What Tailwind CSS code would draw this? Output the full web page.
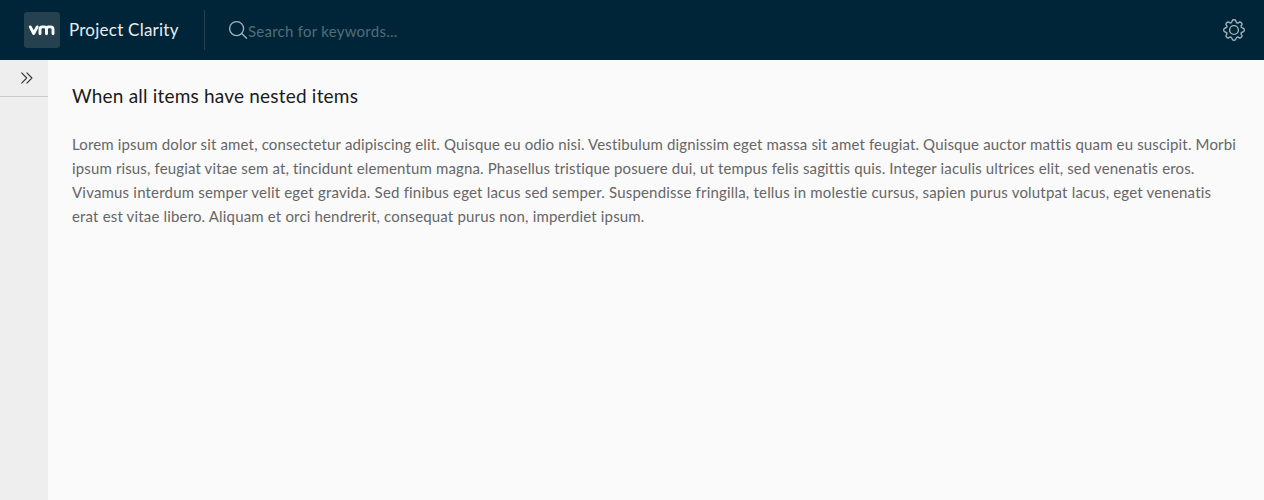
<!DOCTYPE html>
<html lang="en">
<head>
<meta charset="utf-8">
<title>Project Clarity</title>
<script src="https://cdn.jsdelivr.net/npm/@tailwindcss/browser@4"></script>
</head>
<body class="h-[500px] flex flex-col overflow-hidden bg-[#fafafa] font-['Lato',sans-serif]">
<header class="h-[60px] shrink-0 flex items-center bg-[#002538] pl-6 pr-[18px]">
  <svg class="size-9 shrink-0" viewBox="0 0 36 36" fill="none">
    <rect width="36" height="36" rx="3" fill="#25404f"/>
    <path d="M6.3 14.9 L9.7 21.5 L13.2 14.9 M16 21.7 V17.3 Q16 14.9 18.2 14.9 H20.2 Q22.5 14.9 22.5 17.3 V21.7 M22.5 17.3 Q22.5 14.9 24.7 14.9 H26.7 Q29 14.9 29 17.3 V21.7" stroke="#fff" stroke-width="2.9" stroke-linecap="round" stroke-linejoin="round"/>
  </svg>
  <span class="ml-[9px] w-[135px] shrink-0 whitespace-nowrap text-[17px] leading-6 tracking-[0.24px] text-[#e9edef]">Project Clarity</span>
  <div class="h-10 w-px bg-[#264252]"></div>
  <svg class="ml-6 size-5 shrink-0" viewBox="0 0 20 20" fill="none" stroke="#a6b4bc" stroke-width="1.3" stroke-linecap="round"><circle cx="7.6" cy="8.6" r="7"/><path d="M12.7 13.5 L17.6 18.3"/></svg>
  <span class="-ml-px mt-px whitespace-nowrap text-[15px] leading-6 tracking-[0.25px] text-[#536d7a]">Search for keywords...</span>
  <svg class="ml-auto size-6 shrink-0" viewBox="0 0 24 24" fill="none" stroke="#a6b4bc" stroke-width="1.4" stroke-linejoin="round"><circle cx="12" cy="12" r="4.4"/><path d="M10.3 2.6 Q10.5 1.7 12 1.7 T13.7 2.6 Q14.1 4.6 15.2 5 T17.5 4 Q18.2 3.7 19.3 4.7 T20 6.5 Q18.7 8.2 19.1 9 T21.4 10.3 Q22.3 10.6 22.3 12 T21.4 13.7 Q19.5 14.2 19.1 15.1 T20 17.5 Q20.3 18.2 19.3 19.3 T17.5 20 Q16.1 18.7 15.2 19.1 T13.7 21.4 Q13.5 22.3 12 22.3 T10.3 21.4 Q9.8 19.4 8.9 19.1 T6.5 20 Q5.8 20.3 4.7 19.3 T4 17.5 Q5.3 16 4.9 15.1 T2.6 13.7 Q1.7 13.4 1.7 12 T2.6 10.3 Q4.5 9.8 4.9 8.9 T4 6.5 Q3.7 5.7 4.7 4.7 T6.5 4 Q8 5.3 8.9 4.9 T10.3 2.6 Z"/></svg>
</header>
<div class="flex flex-1">
  <nav class="w-12 bg-[#eee]">
    <div class="h-[37px] border-b border-[#ccc] pl-[20px] pt-[11px]">
      <svg class="size-[14px]" viewBox="0 0 14 14" fill="none" stroke="#333" stroke-width="1.1" stroke-linecap="round" stroke-linejoin="round"><path d="M1.7 1.9 L6.7 7 L1.7 12.1 M6.9 1.9 L11.9 7 L6.9 12.1"/></svg>
    </div>
  </nav>
  <main class="flex-1 pl-6 pt-6 whitespace-nowrap">
    <h1 class="text-[19px] leading-6 tracking-[0.2px] text-[#1a1a1a]">When all items have nested items</h1>
    <p class="mt-6 text-[15px] leading-6 text-[#666]">
      <span class="block tracking-[0.15px]">Lorem ipsum dolor sit amet, consectetur adipiscing elit. Quisque eu odio nisi. Vestibulum dignissim eget massa sit amet feugiat. Quisque auctor mattis quam eu suscipit. Morbi</span>
      <span class="block tracking-[0.14px]">ipsum risus, feugiat vitae sem at, tincidunt elementum magna. Phasellus tristique posuere dui, ut tempus felis sagittis quis. Integer iaculis ultrices elit, sed venenatis eros.</span>
      <span class="block tracking-[0.19px]">Vivamus interdum semper velit eget gravida. Sed finibus eget lacus sed semper. Suspendisse fringilla, tellus in molestie cursus, sapien purus volutpat lacus, eget venenatis</span>
      <span class="block tracking-[0.165px]">erat est vitae libero. Aliquam et orci hendrerit, consequat purus non, imperdiet ipsum.</span>
    </p>
  </main>
</div>
</body>
</html>
